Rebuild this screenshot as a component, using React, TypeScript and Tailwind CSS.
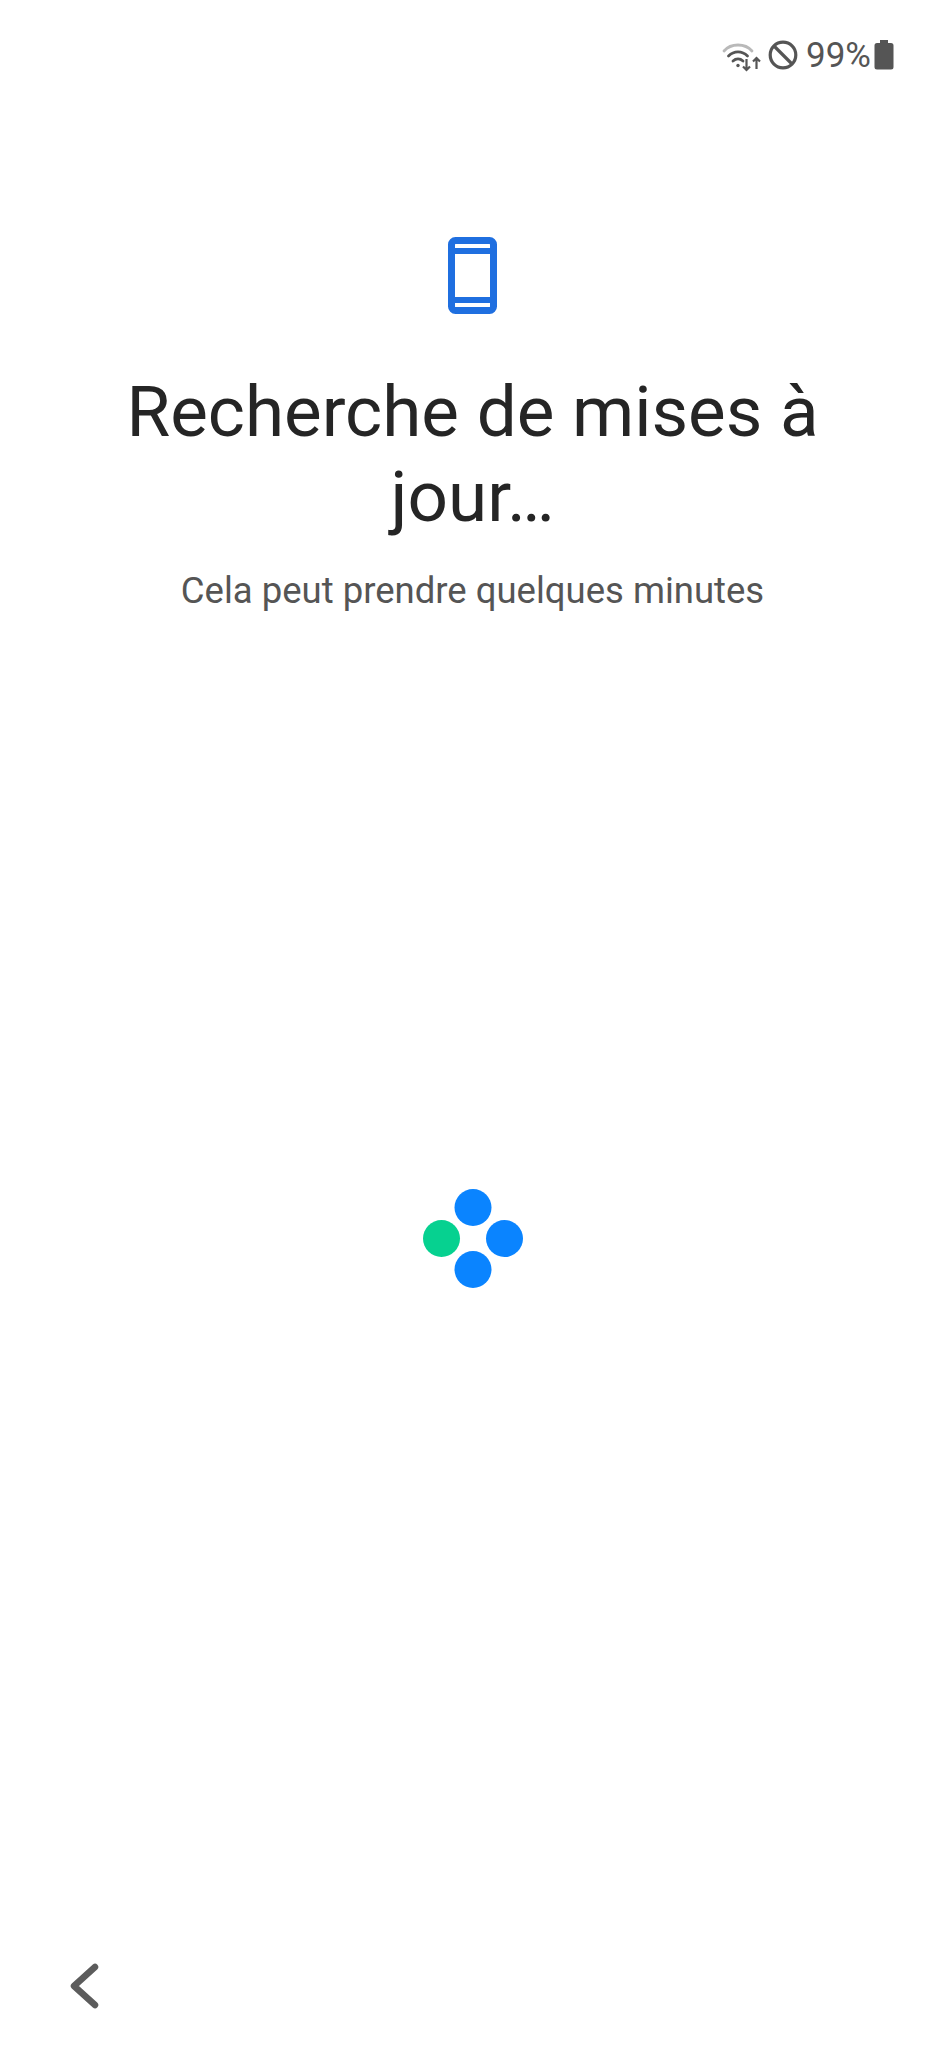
function WifiIcon() {
  return (
    <svg width="40" height="34" viewBox="0 0 40 34" fill="none">
      {/* outer arc is dimmed, signal not full */}
      <path d="M2 13 C9 5 23 5 30 13" stroke="#b9b9b9" strokeWidth="2.8" strokeLinecap="round" />
      <path d="M6.5 18 C12 12.5 20 12.5 25.5 18" stroke="#555" strokeWidth="2.8" strokeLinecap="round" />
      <path d="M11 23 C14 20.3 18 20.3 21 23" stroke="#555" strokeWidth="2.8" strokeLinecap="round" />
      <circle cx="16" cy="27.5" r="1.7" fill="#555" />
      <path d="M24.5 21 V32 M21 28.5 L24.5 32 L28 28.5" stroke="#555" strokeWidth="2.2" />
      <path d="M34.5 31 V20 M31 23.5 L34.5 20 L38 23.5" stroke="#555" strokeWidth="2.2" />
    </svg>
  );
}

function BlockedIcon() {
  return (
    <svg width="30" height="30" viewBox="0 0 30 30" fill="none" stroke="#555" strokeWidth="3.2">
      <circle cx="15" cy="15" r="12.8" />
      <path d="M6 6 L24 24" />
    </svg>
  );
}

function BatteryIcon() {
  return (
    <svg width="20" height="30" viewBox="0 0 20 30" fill="#555">
      <path d="M6 0 H14 V3 H17 Q19.5 3 19.5 5.5 V27 Q19.5 29.5 17 29.5 H3 Q0.5 29.5 0.5 27 V5.5 Q0.5 3 3 3 H6 Z" />
    </svg>
  );
}

function PhoneIcon() {
  return (
    <svg width="49" height="77" viewBox="0 0 49 77" fill="none">
      <rect x="3.5" y="3.5" width="42" height="70" rx="4" stroke="#1f6fe0" strokeWidth="7" />
      <path d="M5 14 H44 M5 63 H44" stroke="#1f6fe0" strokeWidth="6" />
    </svg>
  );
}

function LoadingDots() {
  return (
    <svg width="100" height="99" viewBox="0 0 100 99">
      <circle cx="50" cy="18.5" r="18.5" fill="#0a84ff" />
      <circle cx="18.5" cy="49.5" r="18.5" fill="#06d190" />
      <circle cx="81.5" cy="49.5" r="18.5" fill="#0a84ff" />
      <circle cx="50" cy="80.5" r="18.5" fill="#0a84ff" />
    </svg>
  );
}

function BackChevron() {
  return (
    <svg width="32" height="46" viewBox="0 0 32 46" fill="none">
      <path d="M27 4 L6 23 L27 42" stroke="#5c5c5c" strokeWidth="6.5" strokeLinecap="round" strokeLinejoin="round" />
    </svg>
  );
}

export default function App() {
  return (
    <div className="flex h-[2048px] w-[945px] flex-col bg-white font-['Roboto',sans-serif]">
      {/* Barra de estado */}
      <div className="flex h-[110px] items-center justify-end pr-[51px]">
        <span className="mr-[3px]"><WifiIcon /></span>
        <span className="ml-[3px]"><BlockedIcon /></span>
        <span className="ml-[8px] text-[35px] leading-none text-[#555]">99%</span>
        <span className="ml-[3px]"><BatteryIcon /></span>
      </div>

      <div className="mt-[127px] flex justify-center">
        <PhoneIcon />
      </div>

      <h1 className="mt-[55px] px-[90px] text-center text-[71px] leading-[85px] font-normal text-[#252525]">
        Recherche de mises à jour…
      </h1>
      <p className="mt-[30px] text-center text-[36.5px] leading-[44px] text-[#555]">
        Cela peut prendre quelques minutes
      </p>

      <div className="mt-[576px] flex justify-center">
        <LoadingDots />
      </div>

      <div className="mt-auto pb-[39px] pl-[68px]">
        <BackChevron />
      </div>
    </div>
  );
}
